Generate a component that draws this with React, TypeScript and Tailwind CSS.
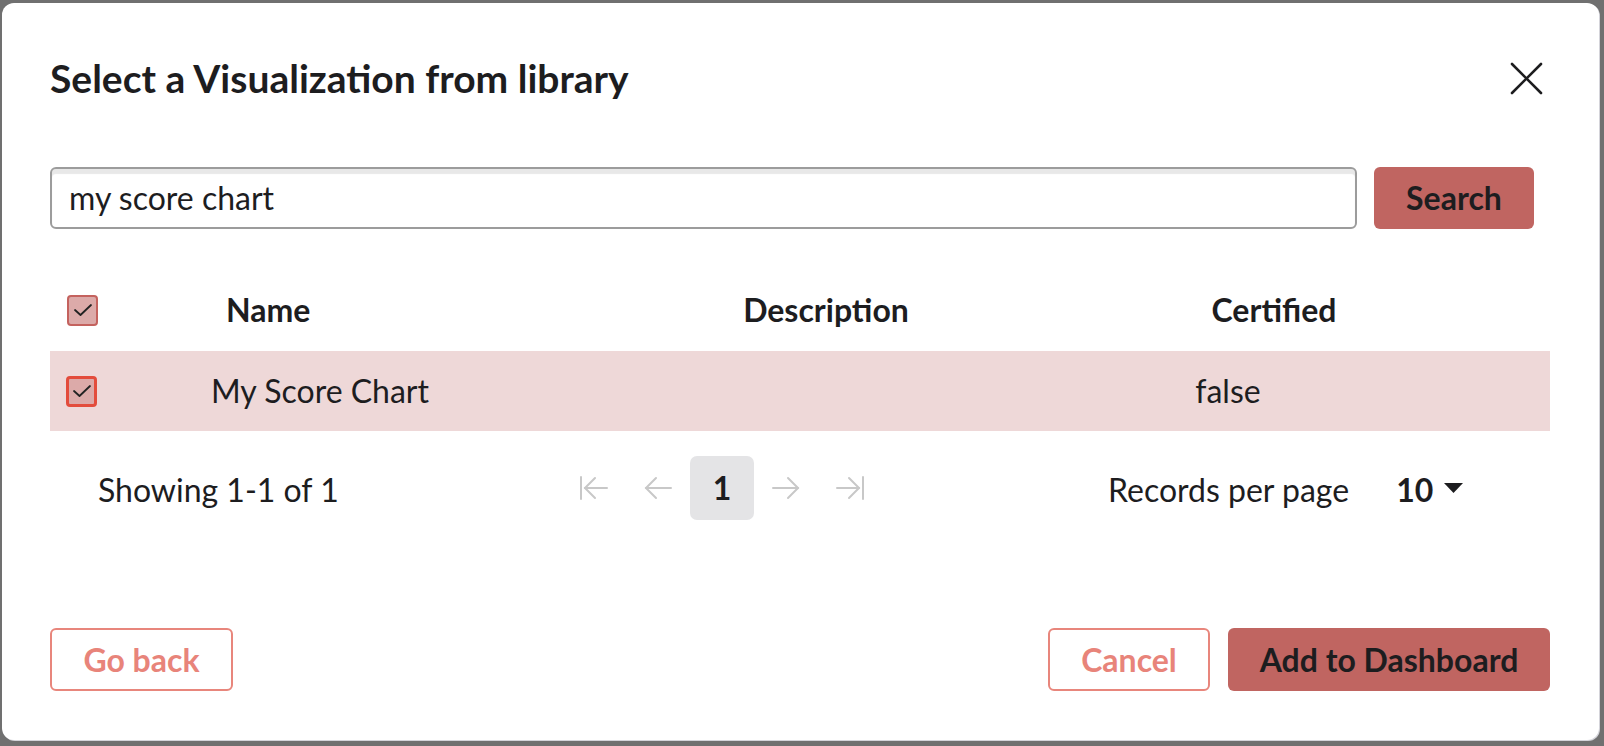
import React from "react";

function CheckBox({ strong }: { strong?: boolean }) {
  return (
    <div
      className={
        "w-[31px] h-[31px] rounded-[4px] bg-[#dcaaa9] flex items-center justify-center " +
        (strong ? "border-[3px] border-[#e34c3c]" : "border-[2px] border-[#c4625e]")
      }
    >
      <svg width="20" height="14" viewBox="0 0 20 14" fill="none">
        <polyline points="2,7 7.5,12 18,2" stroke="#222" strokeWidth="1.8" strokeLinecap="round" strokeLinejoin="round" />
      </svg>
    </div>
  );
}

function Arrow({ dir, bar }: { dir: "left" | "right"; bar?: boolean }) {
  return (
    <svg width="30" height="24" viewBox="0 0 30 24" fill="none" stroke="#c8c8c8" strokeWidth="2" strokeLinecap="round">
      {dir === "left" ? (
        <>
          {bar && <line x1="2" y1="1" x2="2" y2="23" />}
          <line x1={bar ? 6 : 3} y1="12" x2="28" y2="12" />
          <polyline points={bar ? "16,2 6,12 16,22" : "13,2 3,12 13,22"} />
        </>
      ) : (
        <>
          {bar && <line x1="28" y1="1" x2="28" y2="23" />}
          <line x1="2" y1="12" x2={bar ? 24 : 27} y2="12" />
          <polyline points={bar ? "14,2 24,12 14,22" : "17,2 27,12 17,22"} />
        </>
      )}
    </svg>
  );
}

export default function App() {
  return (
    <div className="w-[1604px] h-[746px] bg-[#707070] pt-[3px] pl-[2px] overflow-hidden font-['Lato','Noto_Sans',sans-serif] text-[#1d1d1f]">
      <div className="w-[1597px] h-[737px] bg-white rounded-[12px] shadow-[1px_1px_0_#d4d4da] flex flex-col pl-[48px] pr-[49px] pt-[52px] pb-[49px]">
        {/* Header */}
        <div className="flex items-center justify-between h-[46px]">
          <h2 className="text-[39px] leading-[46px] font-bold">Select a Visualization from library</h2>
          <button className="mr-[7px]">
            <svg width="33" height="33" viewBox="0 0 33 33" fill="none" stroke="#1d1d1f" strokeWidth="2.6" strokeLinecap="round">
              <line x1="2" y1="2" x2="31" y2="31" />
              <line x1="31" y1="2" x2="2" y2="31" />
            </svg>
          </button>
        </div>

        {/* Search */}
        <div className="flex items-center mt-[66px] pr-[16px]">
          <div className="flex-1 h-[62px] border-2 border-[#9c9c9c] rounded-[6px] shadow-[inset_0_5px_1px_#e8e8e8] flex items-center pl-[17px] text-[32px]">
            my score chart
          </div>
          <button className="ml-[17px] w-[160px] h-[62px] rounded-[6px] bg-[#c06561] text-[32px] font-bold">
            Search
          </button>
        </div>

        {/* Table header */}
        <div className="flex items-center h-[62px] mt-[50px] text-[32px] font-bold">
          <div className="w-[176px] pl-[17px]">
            <CheckBox />
          </div>
          <div className="w-[400px]">Name</div>
          <div className="w-[400px] text-center">Description</div>
          <div className="w-[496px] text-center">Certified</div>
        </div>

        {/* Row */}
        <div className="flex items-center h-[80px] mt-[10px] bg-[#eed8d8] text-[32px]">
          <div className="w-[161px] pl-[16px]">
            <CheckBox strong />
          </div>
          <div className="w-[415px]">My Score Chart</div>
          <div className="w-[400px]" />
          <div className="w-[404px] text-center">false</div>
        </div>

        {/* Pagination */}
        <div className="flex items-center h-[64px] mt-[25px] text-[32px]">
          <div className="w-[512px] pl-[48px] pt-[3px]">Showing 1-1 of 1</div>
          <div className="w-[64px] flex justify-center"><Arrow dir="left" bar /></div>
          <div className="w-[64px] flex justify-center"><Arrow dir="left" /></div>
          <div className="w-[64px] h-[64px] rounded-[7px] bg-[#e4e4e6] flex items-center justify-center font-bold">1</div>
          <div className="w-[64px] flex justify-center"><Arrow dir="right" /></div>
          <div className="w-[64px] flex justify-center"><Arrow dir="right" bar /></div>
          <div className="ml-[226px] pt-[3px]">Records per page</div>
          <div className="ml-[47px] pt-[3px] font-bold">10</div>
          <svg className="ml-[11px]" width="19" height="10" viewBox="0 0 19 10">
            <polygon points="0,0 19,0 9.5,10" fill="#1d1d1f" />
          </svg>
        </div>

        {/* Footer */}
        <div className="mt-auto flex items-center justify-between">
          <button className="w-[183px] h-[63px] rounded-[6px] border-2 border-[#e8867c] text-[#e8847a] text-[32px] font-bold">
            Go back
          </button>
          <div className="flex items-center gap-[18px]">
            <button className="w-[162px] h-[63px] rounded-[6px] border-2 border-[#e8867c] text-[#e8847a] text-[32px] font-bold">
              Cancel
            </button>
            <button className="w-[322px] h-[63px] rounded-[6px] bg-[#c06561] text-[32px] font-bold">
              Add to Dashboard
            </button>
          </div>
        </div>
      </div>
    </div>
  );
}
